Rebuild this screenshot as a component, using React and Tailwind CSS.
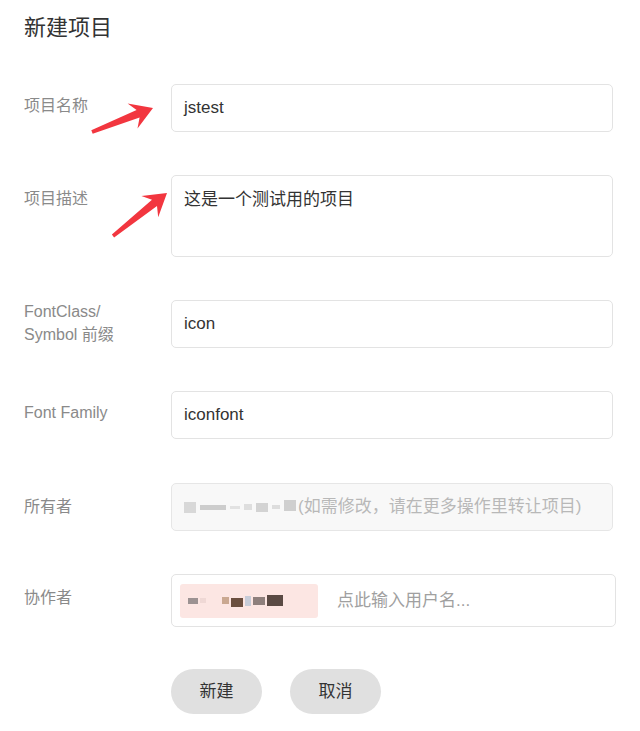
import React from "react";

const font = { fontFamily: '"Liberation Sans", "Noto Sans CJK SC", sans-serif' };

// tapered red arrow from tail (x1,y1) to tip (x2,y2)
function arrowPoints(x1, y1, x2, y2) {
  const dx = x2 - x1;
  const dy = y2 - y1;
  const L = Math.hypot(dx, dy);
  const ux = dx / L;
  const uy = dy / L;
  const nx = -uy;
  const ny = ux;
  const at = (d, w) => [x1 + ux * d + nx * w, y1 + uy * d + ny * w];
  const pts = [
    at(0, 1.8),
    at(L - 16, 4),
    at(L - 22, 13.5),
    at(L, 0),
    at(L - 22, -13.5),
    at(L - 16, -4),
    at(0, -1.8),
  ];
  return pts.map((p) => p.map((v) => v.toFixed(1)).join(",")).join(" ");
}

function Row({ label, labelPad = "pt-[10px]", children, className = "mb-[43px]" }) {
  return (
    <div className={`flex ${className}`}>
      <div className={`w-[147px] shrink-0 text-[16px] leading-[23px] text-[#8a8a8a] ${labelPad}`}>
        {label}
      </div>
      {children}
    </div>
  );
}

function Blocks({ items, gap = "gap-[3px]" }) {
  return (
    <div className={`flex items-center ${gap}`}>
      {items.map((b, i) => (
        <span
          key={i}
          className="block"
          style={{ width: b[0], height: b[1], background: b[2], marginTop: b[3] || 0 }}
        />
      ))}
    </div>
  );
}

export default function App() {
  return (
    <div className="relative min-h-[731px] w-[640px] bg-white pl-[24px] pt-[13px]" style={font}>
      <h1 className="text-[22px] leading-[30px] text-[#333] mb-[41px]">新建项目</h1>

      <Row label="项目名称">
        <div className="w-[442px] h-[48px] border border-[#e3e3e3] rounded-[5px] flex items-center px-[12px] text-[17px] text-[#333]">
          jstest
        </div>
      </Row>

      <Row label="项目描述" labelPad="pt-[12px]">
        <div className="w-[442px] h-[82px] border border-[#e3e3e3] rounded-[5px] px-[12px] pt-[12px] text-[17px] leading-[24px] text-[#333]">
          这是一个测试用的项目
        </div>
      </Row>

      <Row
        label={
          <>
            FontClass/
            <br />
            Symbol 前缀
          </>
        }
        labelPad="pt-0"
      >
        <div className="w-[442px] h-[48px] border border-[#e3e3e3] rounded-[5px] flex items-center px-[12px] text-[17px] text-[#333]">
          icon
        </div>
      </Row>

      <Row label="Font Family" className="mb-[44px]">
        <div className="w-[442px] h-[48px] border border-[#e3e3e3] rounded-[5px] flex items-center px-[12px] text-[17px] text-[#333]">
          iconfont
        </div>
      </Row>

      <Row label="所有者" labelPad="pt-[12px]">
        <div className="w-[442px] h-[48px] border border-[#e6e6e6] bg-[#f8f8f8] rounded-[5px] flex items-center px-[12px] text-[17px] text-[#b8b8b8]">
          <div className="w-[114px] flex items-center">
            <Blocks
              gap="gap-[4px]"
              items={[
                [12, 11, "#d8d8d8"],
                [26, 5, "#cdcdcd"],
                [10, 3, "#e2e2e2"],
                [8, 6, "#dedede"],
                [12, 9, "#d3d3d3"],
                [8, 4, "#dddddd"],
                [12, 11, "#cfcfcf", -4],
              ]}
            />
          </div>
          <span>(如需修改，请在更多操作里转让项目)</span>
        </div>
      </Row>

      <Row label="协作者" labelPad="pt-[12px]" className="mb-[42px]">
        <div className="w-[445px] h-[53px] border border-[#e3e3e3] rounded-[5px] flex items-center px-[8px] text-[17px] text-[#a0a0a0]">
          <div className="w-[138px] h-[34px] bg-[#fce6e3] rounded-[3px] flex items-center px-[8px] gap-[16px] mr-[19px]">
            <Blocks
              gap="gap-[2px]"
              items={[
                [10, 6, "#9c9292"],
                [6, 5, "#efd8d5"],
              ]}
            />
            <Blocks
              gap="gap-[2px]"
              items={[
                [7, 7, "#caa891"],
                [12, 9, "#6b4f3f", 4],
                [6, 10, "#c7ccd8"],
                [12, 8, "#8e7f7c"],
                [16, 11, "#5a4a44"],
              ]}
            />
          </div>
          <span>点此输入用户名...</span>
        </div>
      </Row>

      <div className="flex pl-[147px] gap-[28px]">
        <button className="w-[91px] h-[45px] rounded-full bg-[#e0e0e0] text-[17px] text-[#333]">新建</button>
        <button className="w-[91px] h-[45px] rounded-full bg-[#e0e0e0] text-[17px] text-[#333]">取消</button>
      </div>

      <svg className="absolute left-0 top-0 pointer-events-none" width="640" height="731">
        <polygon points={arrowPoints(92, 132, 153, 108)} fill="#f2363f" strokeLinejoin="round" />
        <polygon points={arrowPoints(113, 236, 167, 193)} fill="#f2363f" strokeLinejoin="round" />
      </svg>
    </div>
  );
}
